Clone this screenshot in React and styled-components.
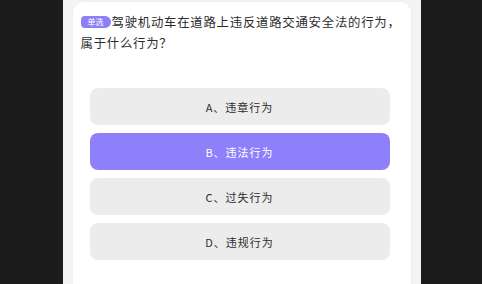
import React from 'react';
import styled, { createGlobalStyle } from 'styled-components';

const GlobalStyle = createGlobalStyle`
  html, body {
    margin: 0;
    padding: 0;
    background: #1b1b1b;
    height: 100%;
  }
  #root {
    height: 100%;
  }
`;

const Page = styled.div`
  height: 284px;
  display: flex;
  justify-content: center;
  overflow: hidden;
  font-family: "Noto Sans CJK SC", "Noto Sans", sans-serif;
`;

const Panel = styled.div`
  width: 358px;
  margin-left: 1px;
  background: #f4f4f4;
  padding: 2px 10px 0;
  box-sizing: border-box;
`;

const Card = styled.div`
  background: #fff;
  border-radius: 11px;
  box-shadow: 0 0 4px rgba(0, 0, 0, 0.04);
  padding: 10px 8px 30px;
  height: 320px;
  box-sizing: border-box;
`;

const Question = styled.div`
  font-size: 12.4px;
  line-height: 21px;
  color: #2c2c2c;
  letter-spacing: 0.75px;
`;

const Line = styled.div`
  display: flex;
  align-items: center;
  white-space: nowrap;
`;

const Badge = styled.span`
  display: inline-flex;
  align-items: center;
  justify-content: center;
  flex: none;
  width: 30px;
  height: 12px;
  margin: -1px 1px 0 0;
  border-radius: 4px 6px 6px 4px;
  background: #8d80f7;
  color: #fff;
  font-size: 8px;
  line-height: 1;
  letter-spacing: 0;
`;

const Options = styled.div`
  display: flex;
  flex-direction: column;
  gap: 8px;
  padding: 34px 13px 0 9px;
`;

const Option = styled.div`
  height: 37px;
  border-radius: 8px;
  display: flex;
  align-items: center;
  justify-content: center;
  font-size: 11px;
  letter-spacing: 1px;
  background: ${(p) => (p.$active ? '#8e80fa' : '#ececec')};
  color: ${(p) => (p.$active ? '#fff' : '#2c2c2c')};
`;

const options = [
  { key: 'A', text: '违章行为' },
  { key: 'B', text: '违法行为', active: true },
  { key: 'C', text: '过失行为' },
  { key: 'D', text: '违规行为' },
];

export default function App() {
  return (
    <>
      <GlobalStyle />
      <Page>
        <Panel>
          <Card>
            <Question>
              <Line>
                <Badge>单选</Badge>
                <span>驾驶机动车在道路上违反道路交通安全法的行为，</span>
              </Line>
              <Line>属于什么行为？</Line>
            </Question>
            <Options>
              {options.map((o) => (
                <Option key={o.key} $active={o.active}>
                  {o.key}、{o.text}
                </Option>
              ))}
            </Options>
          </Card>
        </Panel>
      </Page>
    </>
  );
}
